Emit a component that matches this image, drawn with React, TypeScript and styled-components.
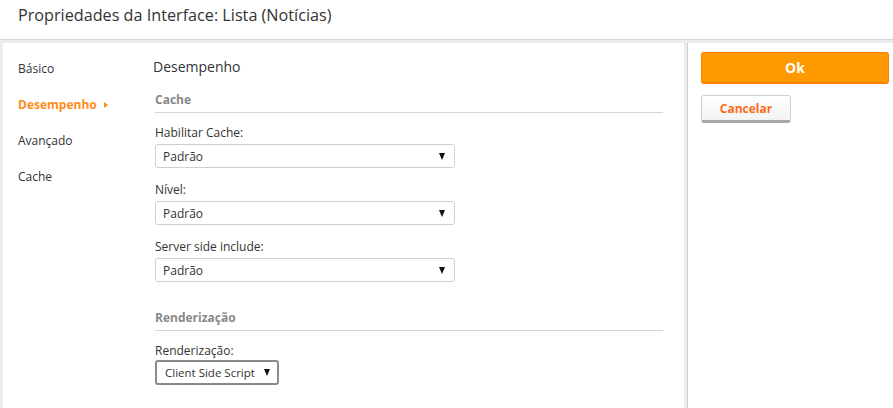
import React from "react";
import styled, { createGlobalStyle } from "styled-components";

const Global = createGlobalStyle`
  html, body { margin: 0; padding: 0; background: #ececec; }
  body { font-family: "Open Sans", "Noto Sans", sans-serif; color: #333; }
  * { box-sizing: border-box; }
`;

const Page = styled.div`
  min-height: 100vh;
  display: flex;
  flex-direction: column;
`;

const Header = styled.header`
  height: 40px;
  background: #fff;
  border-bottom: 1px solid #d6d6d6;
  display: flex;
  align-items: flex-start;
  padding: 5px 0 0 18px;
`;

const Title = styled.h1`
  margin: 0;
  font-size: 16.2px;
  line-height: 20px;
  font-weight: 400;
  color: #333;
`;

const Body = styled.div`
  flex: 1;
  display: flex;
  padding-top: 3px;
`;

const MainPanel = styled.div`
  margin-left: 3px;
  width: 681px;
  background: #fff;
  display: flex;
`;

const Nav = styled.nav`
  width: 150px;
  padding: 16px 0 0 15px;
  display: flex;
  flex-direction: column;
  gap: 17px;
`;

const NavItem = styled.div<{ $active?: boolean }>`
  font-size: 12px;
  line-height: 19px;
  color: ${(p) => (p.$active ? "#ff8c1a" : "#333")};
  font-weight: ${(p) => (p.$active ? 700 : 400)};
  display: flex;
  align-items: center;
  gap: 7px;
`;

const NavArrow = styled.span`
  width: 0;
  height: 0;
  border-top: 3px solid transparent;
  border-bottom: 3px solid transparent;
  border-left: 4px solid #ff8c1a;
`;

const Content = styled.div`
  flex: 1;
  padding: 14px 21px 0 0;
  display: flex;
  flex-direction: column;
`;

const PageHeading = styled.h2`
  margin: 0 0 14px;
  font-size: 14px;
  font-weight: 400;
  line-height: 20px;
  color: #333;
`;

const Section = styled.section<{ $spaced?: boolean }>`
  padding-left: 2px;
  display: flex;
  flex-direction: column;
  margin-top: ${(p) => (p.$spaced ? 14 : 0)}px;
`;

const SectionTitle = styled.div`
  font-size: 12px;
  font-weight: 700;
  color: #888;
  line-height: 18px;
  padding-bottom: 3px;
  border-bottom: 1px solid #d6d6d6;
  margin-bottom: 11px;
`;

const Field = styled.div<{ $gap?: number }>`
  display: flex;
  flex-direction: column;
  align-items: flex-start;
  gap: ${(p) => p.$gap ?? 2}px;
  margin-bottom: 13px;
`;

const Label = styled.label`
  font-size: 12px;
  line-height: 18px;
  color: #333;
`;

const Select = styled.div<{ $w: number; $strong?: boolean }>`
  width: ${(p) => p.$w}px;
  height: ${(p) => (p.$strong ? 25 : 24)}px;
  border: ${(p) => (p.$strong ? "2px solid #8a8a8a" : "1px solid #cfcfcf")};
  border-radius: 3px;
  display: flex;
  align-items: center;
  justify-content: space-between;
  padding: 0 ${(p) => (p.$strong ? 7 : 9)}px 0 ${(p) => (p.$strong ? 8 : 7)}px;
  font-size: ${(p) => (p.$strong ? 11.5 : 12)}px;
  color: #333;
  background: #fff;
`;

const Caret = styled.span`
  width: 0;
  height: 0;
  border-left: 3.5px solid transparent;
  border-right: 3.5px solid transparent;
  border-top: 7px solid #111;
`;

const Side = styled.aside`
  flex: 1;
  margin-left: 3px;
  border-left: 1px solid #cfcfcf;
  background: #fff;
  padding: 9px 4px 0 13px;
  display: flex;
  flex-direction: column;
  align-items: flex-start;
  gap: 11px;
`;

const OkButton = styled.button`
  width: 188px;
  height: 32px;
  background: #ff9900;
  border: 1px solid #ff7f00;
  border-bottom-width: 2px;
  border-radius: 3px;
  color: #fff;
  font-family: inherit;
  font-size: 14px;
  font-weight: 700;
`;

const CancelButton = styled.button`
  width: 90px;
  height: 28px;
  background: linear-gradient(#ffffff, #f3f3f3);
  border: 1px solid #d0d0d0;
  border-bottom: 3px solid #a9a9a9;
  border-radius: 3px;
  color: #ff6a1a;
  font-family: inherit;
  font-size: 12px;
  font-weight: 700;
`;

const fields = [
  { label: "Habilitar Cache:", value: "Padrão" },
  { label: "Nível:", value: "Padrão" },
  { label: "Server side include:", value: "Padrão" },
];

export default function App() {
  return (
    <Page>
      <Global />
      <Header>
        <Title>Propriedades da Interface: Lista (Notícias)</Title>
      </Header>
      <Body>
        <MainPanel>
          <Nav>
            <NavItem>Básico</NavItem>
            <NavItem $active>
              Desempenho <NavArrow />
            </NavItem>
            <NavItem>Avançado</NavItem>
            <NavItem>Cache</NavItem>
          </Nav>
          <Content>
            <PageHeading>Desempenho</PageHeading>
            <Section>
              <SectionTitle>Cache</SectionTitle>
              {fields.map((f) => (
                <Field key={f.label}>
                  <Label>{f.label}</Label>
                  <Select $w={300}>
                    {f.value}
                    <Caret />
                  </Select>
                </Field>
              ))}
            </Section>
            <Section $spaced>
              <SectionTitle>Renderização</SectionTitle>
              <Field $gap={0}>
                <Label>Renderização:</Label>
                <Select $w={124} $strong>
                  Client Side Script
                  <Caret />
                </Select>
              </Field>
            </Section>
          </Content>
        </MainPanel>
        <Side>
          <OkButton>Ok</OkButton>
          <CancelButton>Cancelar</CancelButton>
        </Side>
      </Body>
    </Page>
  );
}
